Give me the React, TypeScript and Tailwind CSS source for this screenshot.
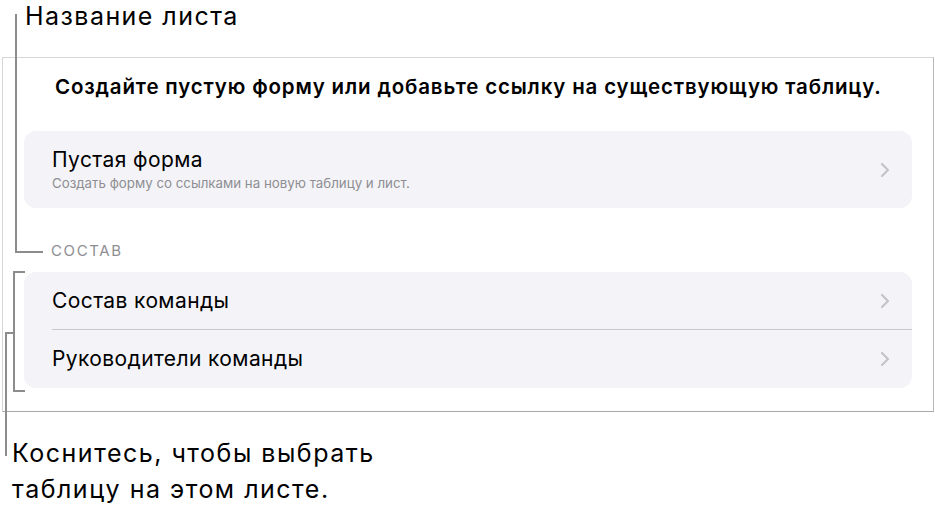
import { FC } from "react";

const Chevron: FC = () => (
  <svg width="10" height="16" viewBox="0 0 10 16" fill="none">
    <path d="M2 2l6 6-6 6" stroke="#c4c4c7" strokeWidth="2.2" strokeLinecap="round" strokeLinejoin="round" />
  </svg>
);

interface RowProps {
  title: string;
  isLast?: boolean;
}

const Row: FC<RowProps> = ({ title, isLast }) => (
  <div className="flex flex-row items-center h-[58px] pl-[28px]">
    <div className={`flex flex-row items-center h-full w-full pr-[22px] ${isLast ? "" : "border-b border-[#c8c8cc]"}`}>
      <span className="flex-1 text-[21px] tracking-[0.4px] text-black">{title}</span>
      <Chevron />
    </div>
  </div>
);

export default function App() {
  return (
    <div className="relative w-[935px] h-[513px] bg-white font-['Inter','Noto_Sans',sans-serif] overflow-hidden">
      <div className="h-[57px] pl-[25px] pt-[1px] text-[25px] tracking-[1.45px] leading-[30px] text-black">Название листа</div>

      <div className="ml-[2px] w-[932px] h-[355px] border border-[#d6d6d6] border-r-[#b8b8b8] border-b-[#a8a8a8] px-[21px] pt-[16px]">
        <div className="pl-[31px] text-[20.5px] tracking-[0.84px] font-semibold leading-[26px] text-black whitespace-nowrap">
          Создайте пустую форму или добавьте ссылку на существующую таблицу.
        </div>

        <div className="mt-[31px] h-[77px] rounded-[12px] bg-[#f4f4f8] flex flex-row items-center pl-[28px] pr-[22px]">
          <div className="flex-1 flex flex-col">
            <span className="text-[21px] tracking-[0.4px] leading-[26px] text-black">Пустая форма</span>
            <span className="text-[13.3px] leading-[20px] text-[#8e8e93]">
              Создать форму со ссылками на новую таблицу и лист.
            </span>
          </div>
          <Chevron />
        </div>

        <div className="mt-[34px] pl-[27px] text-[15px] tracking-[1.6px] leading-[18px] text-[#8e8e93]">СОСТАВ</div>

        <div className="mt-[12px] rounded-[12px] bg-[#f4f4f8] flex flex-col">
          <Row title="Состав команды" />
          <Row title="Руководители команды" isLast />
        </div>
      </div>

      <div className="mt-[23px] pl-[12px] text-[25px] tracking-[1.5px] leading-[36px] text-black">
        <p>Коснитесь, чтобы выбрать</p>
        <p>таблицу на этом листе.</p>
      </div>

      {/* callout lines */}
      <div className="absolute left-[15px] top-[14px] w-[2px] h-[239px] bg-[#8c8c8c]" />
      <div className="absolute left-[15px] top-[251px] w-[28px] h-[2px] bg-[#8c8c8c]" />

      <div className="absolute left-[13px] top-[271px] w-[2px] h-[121px] bg-[#8c8c8c]" />
      <div className="absolute left-[13px] top-[271px] w-[12px] h-[2px] bg-[#8c8c8c]" />
      <div className="absolute left-[13px] top-[390px] w-[12px] h-[2px] bg-[#8c8c8c]" />

      <div className="absolute left-[5px] top-[332px] w-[9px] h-[2px] bg-[#8c8c8c]" />
      <div className="absolute left-[5px] top-[332px] w-[2px] h-[124px] bg-[#8c8c8c]" />
    </div>
  );
}
